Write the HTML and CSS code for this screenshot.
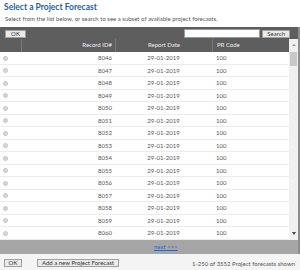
FILE: index.html
```html
<!DOCTYPE HTML>
<html>
<head>
    <meta charset="utf-8"/>
    <title>Select a Project Forecast</title>
    <link rel="stylesheet" href="styles.css">
</head>
<body>
<div id="container">
    <div class="title">Select a Project Forecast</div>
    <div class="sub">Select from the list below, or search to see a subset of available project forecasts.</div>

    <div class="panel">
        <div class="toolbar">
            <button class="btn">OK</button>
            <span class="spacer"></span>
            <input type="text" class="search"/>
            <button class="btn">Search</button>
        </div>
        <div class="grid">
            <div class="tablewrap">
                <div class="row head">
                    <div class="c1"></div>
                    <div class="c2">Record ID#</div>
                    <div class="c3">Report Date</div>
                    <div class="c4">PR Code</div>
                </div>
                <div id="list"></div>
            </div>
            <div class="scroll">
                <div class="arrow up"></div>
                <div class="thumb"></div>
                <div class="track"></div>
                <div class="arrow down"></div>
            </div>
        </div>
        <div class="pager"><a href="#">next &gt;&gt;&gt;</a></div>
    </div>

    <div class="footer">
        <button class="btn">OK</button>
        <button class="btn add">Add a new Project Forecast</button>
        <span class="spacer"></span>
        <span class="status">1-250 of 3552 Project forecasts shown</span>
    </div>
</div>
<script type="text/javascript">
    var list = document.getElementById("list");
    var result = "";
    for(var i=8046;i<=8060;i++){
        result += "<div class='row'><div class='c1'><span class='radio'></span></div><div class='c2'>"+i+"</div><div class='c3'>29-01-2019</div><div class='c4'>100</div></div>";
    }
    list.innerHTML = result;
</script>
</body>
</html>
```

FILE: styles.css
```css
body, html{
    margin:0px; padding:0px;
    font-family: Lato, "Open Sans", sans-serif;
    color:#555;
}
#container{
    width:300px;
    height:270px;
    overflow:hidden;
}
.title{
    color:#1d5ea6;
    font-weight:bold;
    font-size:8.5px;
    line-height:11px;
    padding:2px 0 0 4px;
}
.sub{
    font-size:6px;
    line-height:8px;
    padding:2px 0 0 5px;
    height:12px;
}
.panel{
    border-right:2px solid #8c8c8c;
    background:#5e5e5e;
}
.toolbar{
    display:flex;
    align-items:center;
    height:11px;
    padding:1px 8px 0 5px;
}
.spacer{ flex:1; }
.btn{
    font-family: Lato, "Open Sans", sans-serif;
    font-size:6px;
    line-height:6px;
    height:8px;
    padding:0 4px;
    border:1px solid #a0a0a0;
    background:#eaeaea;
    color:#333;
    margin:0;
}
.toolbar .btn:first-child{ width:21px; }
.search{
    width:74px;
    height:7px;
    border:1px solid #999;
    padding:0;
    margin-right:2px;
    font-size:6px;
}
.grid{
    display:flex;
}
.tablewrap{
    flex:1;
}
.row{
    display:grid;
    grid-template-columns:21px 94px 97px 1fr;
    height:12.5px;
    line-height:12px;
    font-size:6px;
    background:#fff;
    border-bottom:1px solid #ececec;
    box-sizing:border-box;
}
.row.head{
    height:13px;
    background:#5e5e5e;
    color:#eee;
    border-bottom:none;
}
.row.head > div + div{
    border-left:1px solid #7a7a7a;
}
.c2{
    text-align:right;
    padding-right:3px;
}
.c3{ text-align:center; }
.c4{ padding-left:4px; }
.radio{
    display:inline-block;
    width:5px;
    height:5px;
    border-radius:50%;
    background:#d6d6d6;
    border:1px solid #c4c4c4;
    box-sizing:border-box;
    margin-left:3px;
    vertical-align:middle;
}
.scroll{
    width:9px;
    background:#f0f0f0;
    display:flex;
    flex-direction:column;
}
.arrow{
    height:13px;
    position:relative;
}
.arrow.up:after, .arrow.down:after{
    content:"";
    position:absolute;
    left:3px;
    border-left:2px solid transparent;
    border-right:2px solid transparent;
}
.arrow.up:after{ top:5px; border-bottom:2px solid #999; }
.arrow.down:after{ top:5px; border-top:3px solid #444; }
.thumb{
    height:14px;
    margin:0 1px;
    background:#c8c8c8;
}
.track{ flex:1; }
.pager{
    background:#a6a6a6;
    height:14px;
    line-height:14px;
    font-size:6px;
    padding-left:154px;
}
.pager a{ color:#1f6fd0; }
.footer{
    display:flex;
    align-items:center;
    height:19px;
    padding:0 5px 0 4px;
    background:#f4f4f4;
}
.footer .btn:first-child{ width:18px; padding:0; }
.footer .add{ margin-left:15px; }
.status{
    font-size:6px;
}
```
